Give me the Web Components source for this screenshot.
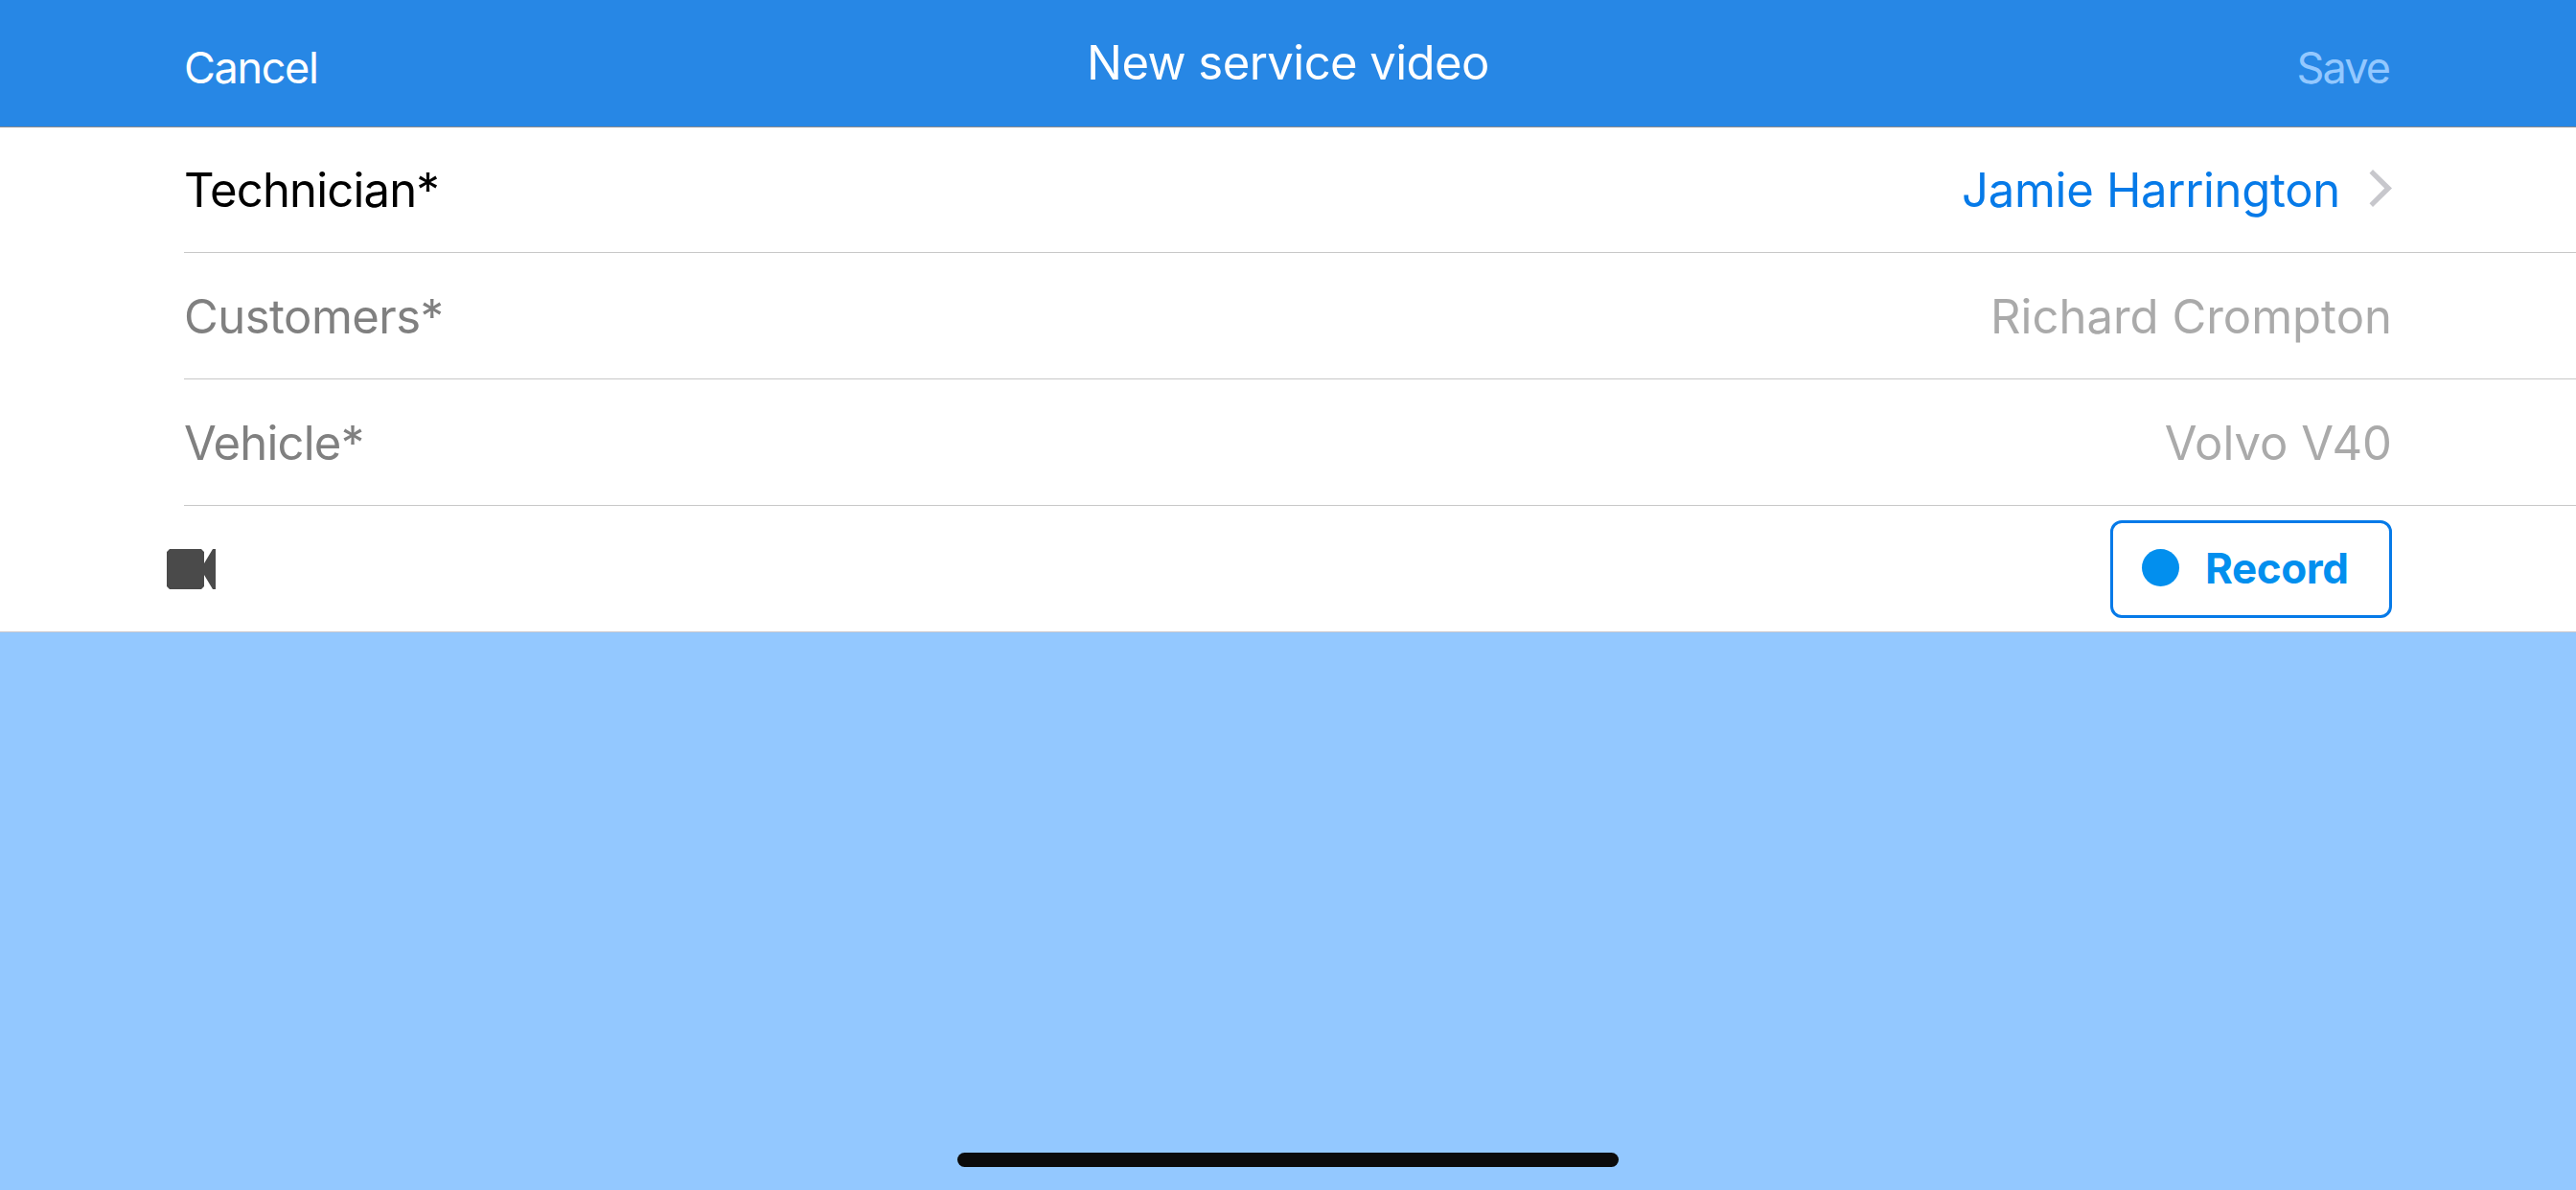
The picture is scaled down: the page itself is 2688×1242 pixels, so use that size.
<!DOCTYPE html>
<html lang="en">
<head>
<meta charset="utf-8">
<title>New service video</title>
<style>
    body {
        margin: 0;
        height: 1242px;
        display: flex;
        flex-direction: column;
        overflow: hidden;
        background: #93c8ff;
        font-family: Inter, "Liberation Sans", sans-serif;
    }
</style>
</head>
<body>
<nav-bar>
    <span slot="left">Cancel</span>
    <span slot="title">New service video</span>
    <span slot="right">Save</span>
</nav-bar>
<form-list>
    <form-row active chevron style="--label-spacing: -0.82px; --value-spacing: -0.3px">
        <span slot="label">Technician*</span>
        <span slot="value">Jamie Harrington</span>
    </form-row>
    <form-row style="--label-spacing: -0.53px">
        <span slot="label">Customers*</span>
        <span slot="value">Richard Crompton</span>
    </form-row>
    <form-row style="--label-spacing: -0.79px">
        <span slot="label">Vehicle*</span>
        <span slot="value">Volvo V40</span>
    </form-row>
    <form-row last>
        <camera-icon slot="label"></camera-icon>
        <record-button slot="value">Record</record-button>
    </form-row>
</form-list>
<home-indicator></home-indicator>

<script>
class NavBar extends HTMLElement {
    constructor() {
        super();
        this.attachShadow({ mode: 'open' }).innerHTML = `
            <style>
                :host {
                    display: grid;
                    grid-template-columns: 1fr auto 1fr;
                    height: 132px;
                    padding: 0 192px;
                    background: #2787e5;
                    border-bottom: 1px solid #8a8a8e;
                    color: #fff;
                    font-size: 45px;
                    line-height: 60px;
                    white-space: nowrap;
                }
                .left { padding-top: 41px; letter-spacing: -1.35px; }
                .right {
                    padding: 41px 3px 0 0;
                    text-align: right;
                    letter-spacing: -1.9px;
                    color: #93c8ff;
                }
                .title { padding-top: 36px; font-size: 49px; letter-spacing: -0.55px; }
            </style>
            <div class="left"><slot name="left"></slot></div>
            <div class="title"><slot name="title"></slot></div>
            <div class="right"><slot name="right"></slot></div>
        `;
    }
}

class FormList extends HTMLElement {
    constructor() {
        super();
        this.attachShadow({ mode: 'open' }).innerHTML = `
            <style>
                :host {
                    display: flex;
                    flex-direction: column;
                    background: #fff;
                    border-bottom: 1px solid #c8c7cc;
                }
            </style>
            <slot></slot>
        `;
    }
}

class FormRow extends HTMLElement {
    constructor() {
        super();
        this.attachShadow({ mode: 'open' }).innerHTML = `
            <style>
                :host {
                    display: flex;
                    align-items: center;
                    justify-content: space-between;
                    box-sizing: border-box;
                    height: 132px;
                    margin-left: 192px;
                    padding-right: 192px;
                    border-bottom: 1px solid #c8c8c8;
                    font-size: 49px;
                    line-height: 60px;
                    white-space: nowrap;
                    color: #808080;
                }
                :host([active]) { height: 131px; color: #000; }
                :host([last]) { height: 131px; padding-top: 1px; border-bottom: 0; }
                .label { padding-top: 3px; letter-spacing: var(--label-spacing, 0); }
                .value {
                    display: flex;
                    align-items: center;
                    letter-spacing: var(--value-spacing, 0);
                    color: #aaa;
                }
                .text { padding-top: 3px; }
                :host([active]) .label, :host([active]) .text { padding-top: 2px; }
                :host([last]) .label, :host([last]) .text { padding-top: 0; }
                :host([active]) .value { color: #067ae8; }
                svg { display: none; margin: 0 0 3px 30px; }
                :host([chevron]) svg { display: block; }
            </style>
            <div class="label"><slot name="label"></slot></div>
            <div class="value">
                <div class="text"><slot name="value"></slot></div>
                <svg width="24" height="39" viewBox="0 0 24 39">
                    <path d="M4 0L24 19.5L4 39L0.5 35.3L16.2 19.5L0.5 3.7Z" fill="#c7c7cc"/>
                </svg>
            </div>
        `;
    }
}

class CameraIcon extends HTMLElement {
    constructor() {
        super();
        this.attachShadow({ mode: 'open' }).innerHTML = `
            <style>
                :host { display: block; margin-left: -18px; }
                svg { display: block; }
            </style>
            <svg width="51" height="42" viewBox="0 0 51 42">
                <path d="M3 0H36L39 3V15L48 0H51V42H48L39 27V39L36 42H3L0 39V3Z" fill="#4a4a4a"/>
            </svg>
        `;
    }
}

class RecordButton extends HTMLElement {
    constructor() {
        super();
        this.attachShadow({ mode: 'open' }).innerHTML = `
            <style>
                :host { display: block; }
                button {
                    display: flex;
                    align-items: center;
                    box-sizing: border-box;
                    width: 294px;
                    height: 102px;
                    padding: 0 0 2px 30px;
                    border: 3px solid #067ae8;
                    border-radius: 12px;
                    background: #fff;
                    color: #028fee;
                    font: bold 44px/60px Inter, "Liberation Sans", sans-serif;
                    letter-spacing: -0.4px;
                }
                .dot {
                    width: 39px;
                    height: 39px;
                    margin: 0 27px 1px 0;
                    border-radius: 50%;
                    background: currentColor;
                }
            </style>
            <button type="button"><span class="dot"></span><slot></slot></button>
        `;
    }
}

class HomeIndicator extends HTMLElement {
    constructor() {
        super();
        this.attachShadow({ mode: 'open' }).innerHTML = `
            <style>
                :host {
                    display: block;
                    width: 690px;
                    height: 15px;
                    margin: auto auto 24px;
                    border-radius: 8px;
                    background: #0b0b0b;
                }
            </style>
        `;
    }
}

customElements.define('nav-bar', NavBar);
customElements.define('form-list', FormList);
customElements.define('form-row', FormRow);
customElements.define('camera-icon', CameraIcon);
customElements.define('record-button', RecordButton);
customElements.define('home-indicator', HomeIndicator);
</script>
</body>
</html>
